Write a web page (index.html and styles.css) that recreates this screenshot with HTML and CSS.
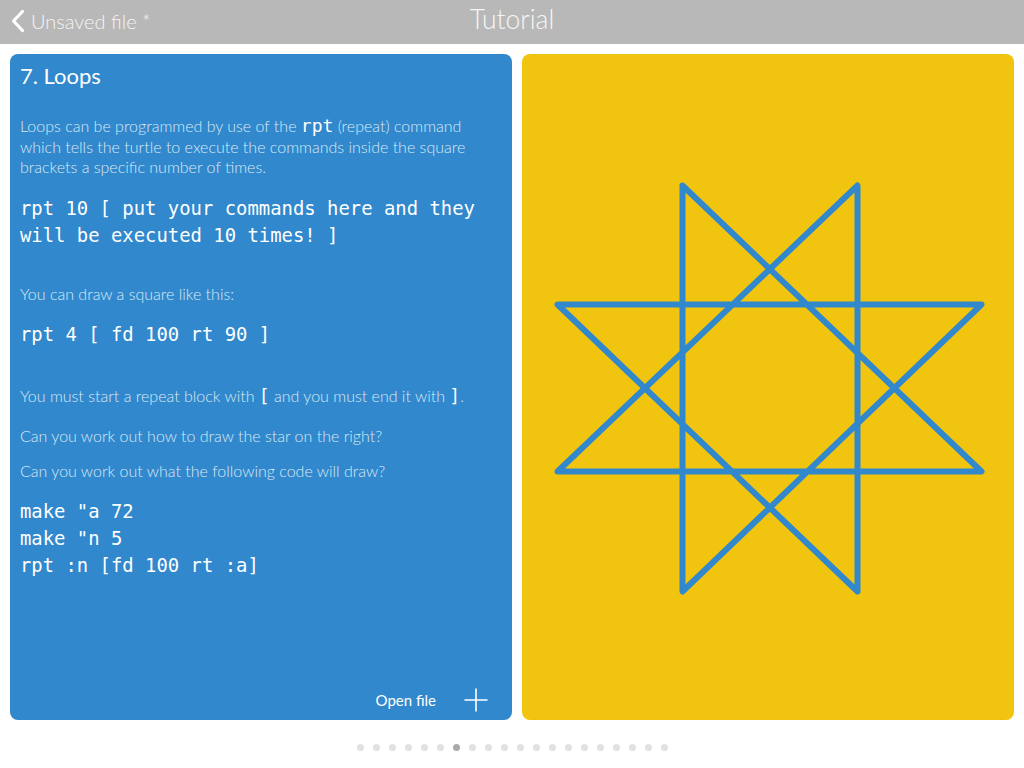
FILE: index.html
```html
<!DOCTYPE html>
<html>
<head>
<meta charset="utf-8">
<link rel="stylesheet" href="styles.css">
</head>
<body>
<header class="topbar">
  <div class="back">
    <svg class="chev" width="16" height="24" viewBox="0 0 16 24"><path d="M12.5 2.5 L3.5 12 L12.5 21.5" fill="none" stroke="#fff" stroke-width="3.2" stroke-linecap="round" stroke-linejoin="round"/></svg>
    <span class="back-label">Unsaved file *</span>
  </div>
  <div class="title">Tutorial</div>
</header>
<main class="content">
  <section class="lesson">
    <h1 class="lesson-title">7. Loops</h1>
    <p class="txt p1">Loops can be programmed by use of the <code class="ic">rpt</code> (repeat) command which tells the turtle to execute the commands inside the square brackets a specific number of times.</p>
    <pre class="code c1">rpt 10 [ put your commands here and they
will be executed 10 times! ]</pre>
    <p class="txt p2">You can draw a square like this:</p>
    <pre class="code c2">rpt 4 [ fd 100 rt 90 ]</pre>
    <p class="txt p3">You must start a repeat block with <code class="ic">[</code> and you must end it with <code class="ic">]</code>.</p>
    <p class="txt p4">Can you work out how to draw the star on the right?</p>
    <p class="txt p5">Can you work out what the following code will draw?</p>
    <pre class="code c3">make "a 72
make "n 5
rpt :n [fd 100 rt :a]</pre>
    <div class="spacer"></div>
    <div class="actions">
      <span class="open">Open file</span>
      <svg class="plus" width="24" height="24" viewBox="0 0 24 24"><path d="M12 0.5 V23.5 M0.5 12 H23.5" stroke="#fff" stroke-width="1.6" fill="none"/></svg>
    </div>
  </section>
  <section class="canvas">
    <svg class="star" width="492" height="666" viewBox="522 54 492 666">
      <path d="M682.5 185.5 L981.5 471.5 L557.5 471.5 L857.5 185.5 L857.5 591.5 L557.5 304.5 L981.5 304.5 L682.5 591.5 Z" fill="none" stroke="#3188cc" stroke-width="6" stroke-linejoin="round" stroke-linecap="round"/>
    </svg>
  </section>
</main>
<nav class="dots">
  <span class="dot"></span><span class="dot"></span><span class="dot"></span><span class="dot"></span><span class="dot"></span><span class="dot"></span><span class="dot active"></span><span class="dot"></span><span class="dot"></span><span class="dot"></span><span class="dot"></span><span class="dot"></span><span class="dot"></span><span class="dot"></span><span class="dot"></span><span class="dot"></span><span class="dot"></span><span class="dot"></span><span class="dot"></span><span class="dot"></span>
</nav>
</body>
</html>
```

FILE: styles.css
```css
* { box-sizing: border-box; }
html, body { margin: 0; padding: 0; }
body {
  width: 1024px;
  height: 768px;
  background: #ffffff;
  font-family: Lato, "Open Sans", sans-serif;
  overflow: hidden;
}
.topbar {
  height: 44px;
  background: #b8b8b8;
  display: flex;
  align-items: center;
  justify-content: center;
  position: relative;
}
.back {
  position: absolute;
  left: 10px;
  top: 0;
  height: 44px;
  display: flex;
  align-items: center;
  gap: 5px;
}
.chev { display: block; margin-top: -2px; }
.back-label {
  color: #f4f4f4;
  font-weight: 300;
  font-size: 20px;
  margin-top: -2px;
}
.title {
  color: #f6f6f6;
  font-weight: 300;
  font-size: 26.5px;
  margin-top: -6px;
}
.content {
  display: flex;
  gap: 10px;
  padding: 10px 10px 0 10px;
  height: 676px;
}
.lesson {
  width: 502px;
  background: #3188cc;
  border-radius: 8px;
  padding: 8px 10px 8px 10px;
  display: flex;
  flex-direction: column;
  color: #ffffff;
}
.canvas {
  flex: 1;
  background: #f1c40f;
  border-radius: 8px;
  overflow: hidden;
}
.star { display: block; }
.lesson-title {
  margin: 0;
  font-size: 22px;
  line-height: 28px;
  font-weight: 400;
  color: #fff;
}
.txt {
  margin: 0;
  font-size: 16px;
  line-height: 20.5px;
  font-weight: 300;
  color: #d9e8f5;
}
.ic {
  font-family: "DejaVu Sans Mono", monospace;
  font-size: 18px;
  color: #fff;
  line-height: 1;
}
.code {
  margin: 0;
  font-family: "DejaVu Sans Mono", monospace;
  font-size: 18.9px;
  line-height: 27px;
  color: #fff;
  white-space: pre;
}
.p1 { margin-top: 26px; }
.c1 { margin-top: 17px; }
.p2 { margin-top: 35px; }
.c2 { margin-top: 17px; }
.p3 { margin-top: 38px; }
.p4 { margin-top: 19px; }
.p5 { margin-top: 14.5px; }
.c3 { margin-top: 16.5px; }
.spacer { flex: 1; }
.actions {
  display: flex;
  justify-content: flex-end;
  align-items: center;
  gap: 28px;
  padding-right: 14px;
  height: 24px;
}
.open {
  font-size: 15px;
  font-weight: 400;
  color: #fff;
}
.plus { display: block; }
.dots {
  display: flex;
  justify-content: center;
  gap: 9px;
  margin-top: 24px;
}
.dot {
  width: 7px;
  height: 7px;
  border-radius: 50%;
  background: #e2e2e2;
}
.dot.active { background: #aaaaaa; }
```
